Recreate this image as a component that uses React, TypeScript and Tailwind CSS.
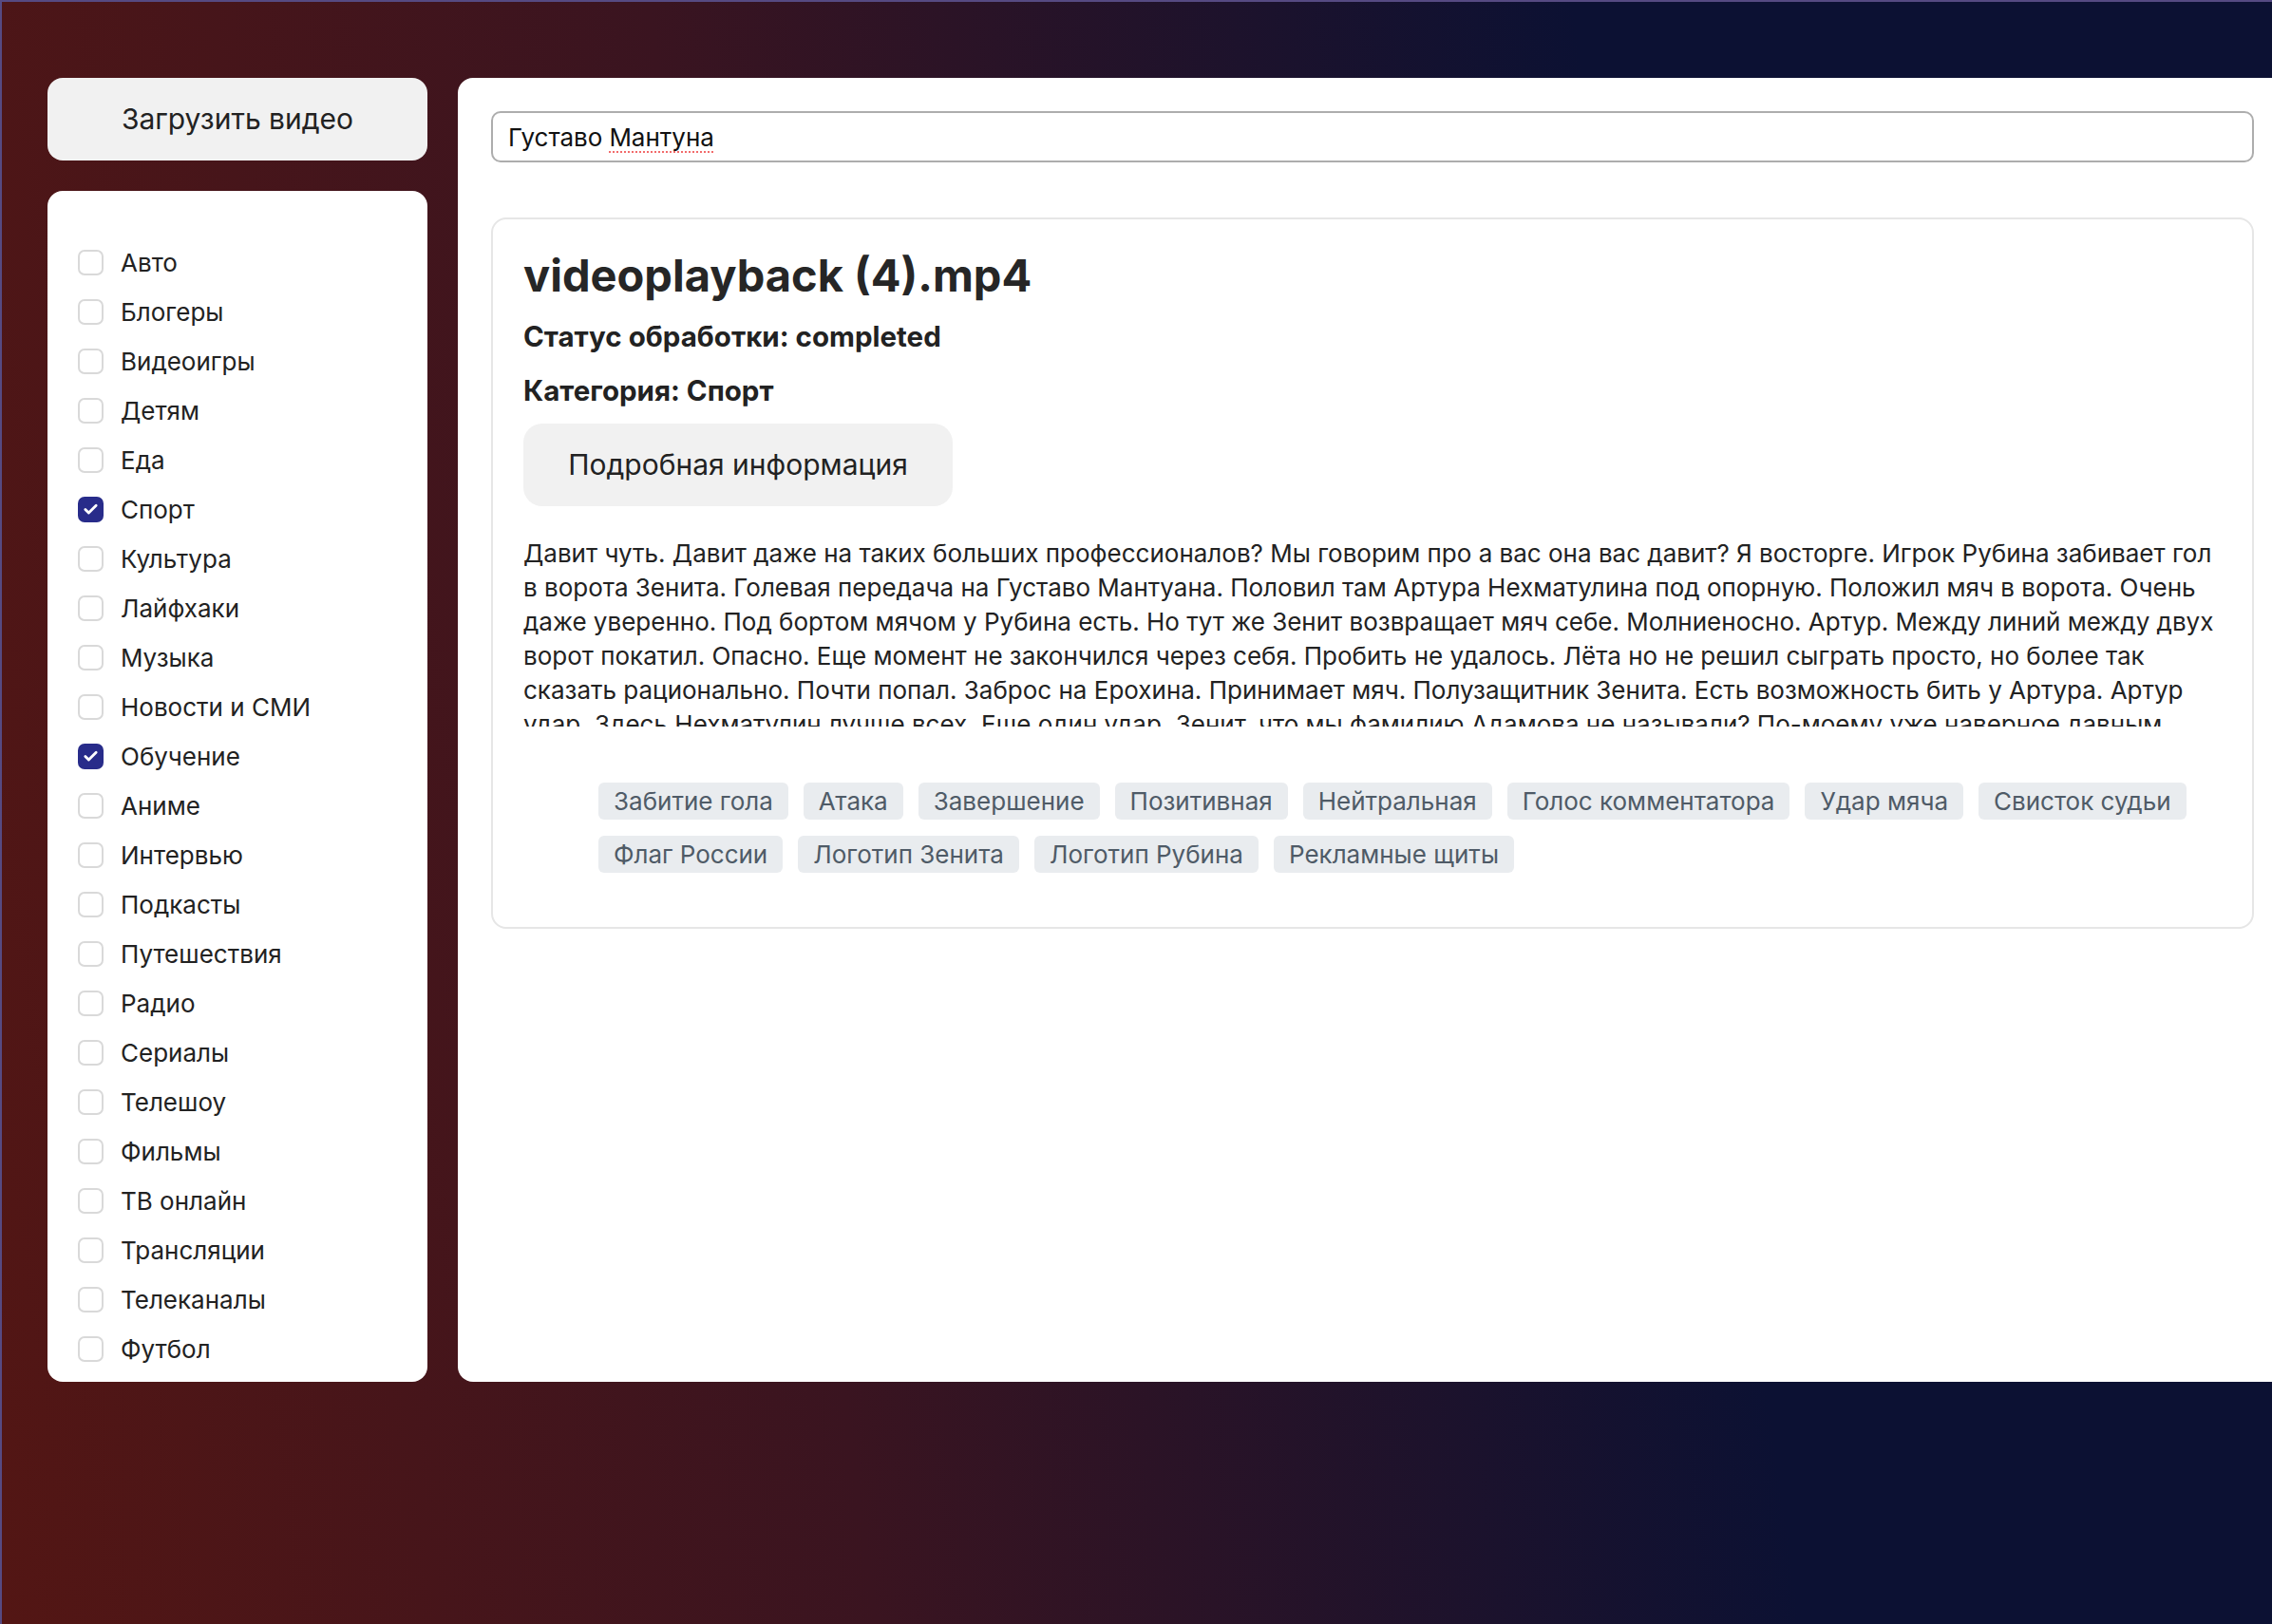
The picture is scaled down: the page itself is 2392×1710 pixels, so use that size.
import { Check } from 'lucide-react';

const categories = [
  { name: 'Авто', checked: false },
  { name: 'Блогеры', checked: false },
  { name: 'Видеоигры', checked: false },
  { name: 'Детям', checked: false },
  { name: 'Еда', checked: false },
  { name: 'Спорт', checked: true },
  { name: 'Культура', checked: false },
  { name: 'Лайфхаки', checked: false },
  { name: 'Музыка', checked: false },
  { name: 'Новости и СМИ', checked: false },
  { name: 'Обучение', checked: true },
  { name: 'Аниме', checked: false },
  { name: 'Интервью', checked: false },
  { name: 'Подкасты', checked: false },
  { name: 'Путешествия', checked: false },
  { name: 'Радио', checked: false },
  { name: 'Сериалы', checked: false },
  { name: 'Телешоу', checked: false },
  { name: 'Фильмы', checked: false },
  { name: 'ТВ онлайн', checked: false },
  { name: 'Трансляции', checked: false },
  { name: 'Телеканалы', checked: false },
  { name: 'Футбол', checked: false },
];

const tags = [
  'Забитие гола',
  'Атака',
  'Завершение',
  'Позитивная',
  'Нейтральная',
  'Голос комментатора',
  'Удар мяча',
  'Свисток судьи',
  'Флаг России',
  'Логотип Зенита',
  'Логотип Рубина',
  'Рекламные щиты',
];

const transcript =
  'Давит чуть. Давит даже на таких больших профессионалов? Мы говорим про а вас она вас давит? Я восторге. Игрок Рубина забивает гол в ворота Зенита. Голевая передача на Густаво Мантуана. Половил там Артура Нехматулина под опорную. Положил мяч в ворота. Очень даже уверенно. Под бортом мячом у Рубина есть. Но тут же Зенит возвращает мяч себе. Молниеносно. Артур. Между линий между двух ворот покатил. Опасно. Еще момент не закончился через себя. Пробить не удалось. Лёта но не решил сыграть просто, но более так сказать рационально. Почти попал. Заброс на Ерохина. Принимает мяч. Полузащитник Зенита. Есть возможность бить у Артура. Артур удар. Здесь Нехматулин лучше всех. Еще один удар. Зенит, что мы фамилию Адамова не называли? По-моему уже наверное давным давно. Рубин держит мяч в центре поля.';

function CategoryRow({ name, checked }: { name: string; checked: boolean }) {
  return (
    <label className="flex h-[52px] items-center gap-[18px]">
      {checked ? (
        <span className="flex h-[27px] w-[27px] items-center justify-center rounded-[7px] bg-[#282c8a]">
          <Check className="h-[17px] w-[17px] text-white" strokeWidth={4} />
        </span>
      ) : (
        <span className="h-[27px] w-[27px] rounded-[7px] border-2 border-[#d9d9d9] bg-white" />
      )}
      <span className="text-[26px] text-[#222]">{name}</span>
    </label>
  );
}

export default function App() {
  return (
    <div
      className="flex min-h-[1710px] w-full items-start gap-[32px] overflow-hidden border-l-2 border-t-2 border-[#564a82] bg-[linear-gradient(82deg,#531614_0%,#3a1420_35%,#0c1133_72%)] pl-[48px] pt-[80px]"
      style={{ fontFamily: 'Inter, "Noto Sans", sans-serif' }}
    >
      {/* Sidebar */}
      <div className="flex w-[400px] shrink-0 flex-col gap-[32px]">
        <button className="h-[87px] w-full rounded-[16px] bg-[#f1f1f1] text-[30px] text-[#222]">
          Загрузить видео
        </button>
        <div className="rounded-[16px] bg-white pb-[9px] pl-[32px] pt-[49px]">
          {categories.map((c) => (
            <CategoryRow key={c.name} name={c.name} checked={c.checked} />
          ))}
        </div>
      </div>

      {/* Main panel */}
      <div className="flex h-[1373px] flex-1 flex-col rounded-l-[16px] bg-white pl-[35px] pr-[19px] pt-[35px]">
        <div className="flex h-[54px] items-center rounded-[10px] border-2 border-[#adadad] pl-[16px] text-[26px] text-[#111]">
          Густаво{' '}
          <span className="ml-[7px] underline decoration-[#f26b6b] decoration-dotted decoration-2 underline-offset-[6px]">
            Мантуна
          </span>
        </div>

        <div className="mt-[58px] rounded-[16px] border-2 border-[#e6e6e6] px-[32px] pb-[57px] pt-[30px] text-[#222]">
          <h2 className="text-[47px] font-bold leading-[58px] text-[#262626]">videoplayback (4).mp4</h2>
          <p className="mt-[17px] text-[29.5px] font-bold leading-[36px]">Статус обработки: completed</p>
          <p className="mt-[21px] text-[29.5px] font-bold leading-[36px]">Категория: Спорт</p>
          <button className="mt-[17px] h-[87px] w-[452px] rounded-[20px] bg-[#f1f1f1] text-[30px] text-[#222]">
            Подробная информация
          </button>
          <p className="mt-[32px] max-h-[200px] overflow-hidden text-[26px] leading-[36px] text-[#222]">
            {transcript}
          </p>
          <ul className="mt-[59px] flex flex-wrap gap-x-[16px] gap-y-[17px] pl-[79px]">
            {tags.map((t) => (
              <li
                key={t}
                className="flex h-[39px] items-center rounded-[6px] bg-[#e9ecef] px-[16px] text-[26px] text-[#4f5b67]"
              >
                {t}
              </li>
            ))}
          </ul>
        </div>
      </div>
    </div>
  );
}
